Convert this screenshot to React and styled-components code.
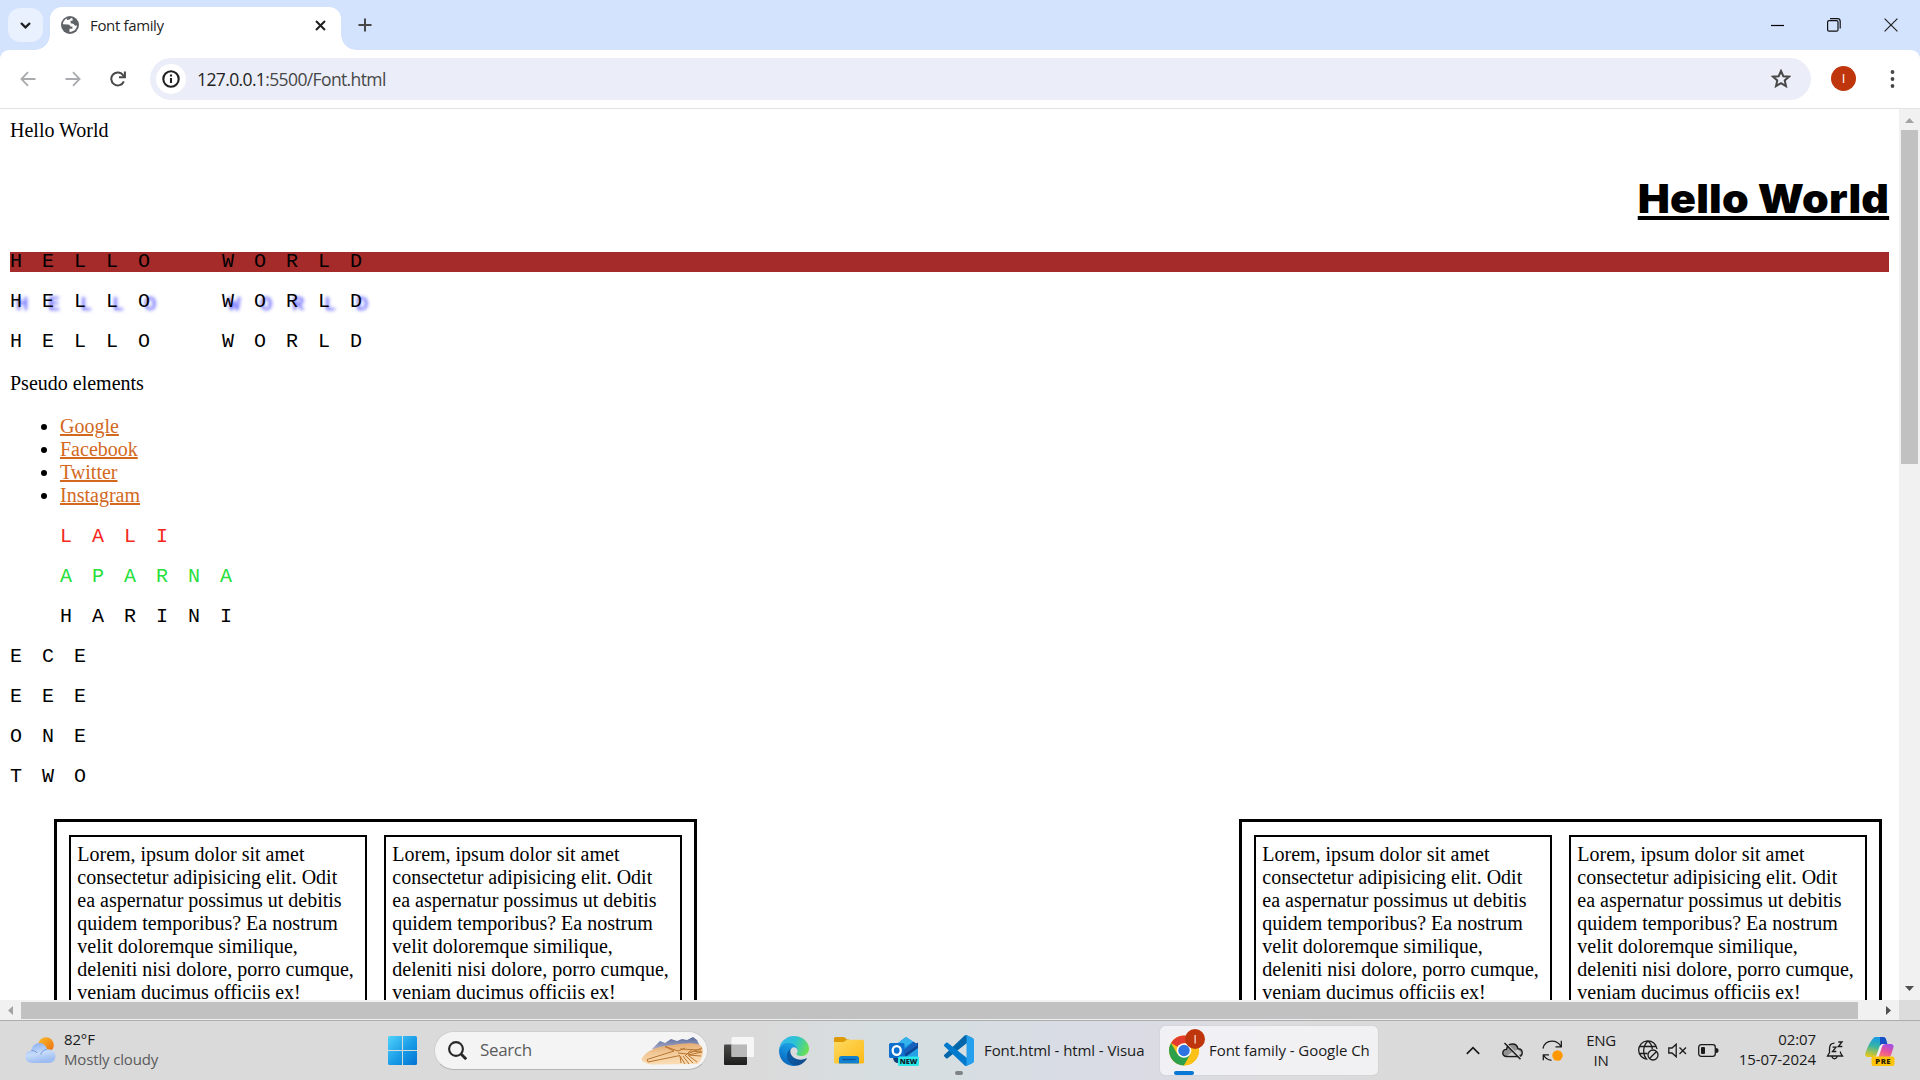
import React from "react";
import styled, { createGlobalStyle } from "styled-components";

const UI = `"Open Sans", "Noto Sans", sans-serif`;

const GlobalStyle = createGlobalStyle`
  *, *::before, *::after { box-sizing: border-box; }
  html, body { margin: 0; padding: 0; overflow: hidden; }
  body { background: #fff; }
  svg { display: block; flex: none; }
`;

const Screen = styled.div`
  width: 1920px;
  height: 1080px;
  display: flex;
  flex-direction: column;
  overflow: hidden;
  background: #fff;
`;

/* ---------- browser chrome ---------- */

const TabStrip = styled.div`
  height: 50px;
  flex: none;
  background: #d3e2fd;
  display: flex;
  align-items: flex-start;
  padding-left: 8px;
`;

const TabSearch = styled.div`
  width: 35px;
  height: 34px;
  margin-top: 8px;
  border-radius: 12px;
  background: #e9f0fe;
  display: grid;
  place-items: center;
`;

const Tab = styled.div`
  position: relative;
  width: 291px;
  height: 43px;
  margin: 7px 0 0 7px;
  padding: 0 15px 7px 11px;
  border-radius: 12px 12px 0 0;
  background: #fff;
  display: flex;
  align-items: center;
  &::before,
  &::after {
    content: "";
    position: absolute;
    bottom: 0;
    width: 15px;
    height: 15px;
  }
  &::before {
    left: -15px;
    background: radial-gradient(circle at 0 0, transparent 14.5px, #fff 15px);
  }
  &::after {
    right: -15px;
    background: radial-gradient(circle at 100% 0, transparent 14.5px, #fff 15px);
  }
`;

const TabTitle = styled.span`
  font: 15px/20px ${UI};
  letter-spacing: -0.35px;
  color: #1f1f1f;
  margin: 0 auto 0 11px;
`;

const NewTab = styled.div`
  margin: 18px auto 0 17px;
`;

const WindowButtons = styled.div`
  display: flex;
  align-items: center;
  height: 50px;
  gap: 43px;
  padding-right: 22px;
`;

const ToolbarShell = styled.div`
  height: 59px;
  flex: none;
  background: #d3e2fd;
`;

const Toolbar = styled.div`
  height: 59px;
  background: #fff;
  border-radius: 9px 9px 0 0;
  border-bottom: 1px solid #e0e2e6;
  display: flex;
  align-items: center;
  padding: 0 21px 0 20px;
`;

const NavGroup = styled.div`
  display: flex;
  gap: 29px;
  width: 130px;
`;

const Omnibox = styled.div`
  width: 1661px;
  height: 42px;
  border-radius: 21px;
  background: #ebeef8;
  display: flex;
  align-items: center;
  padding: 0 20px 0 6px;
`;

const SiteInfo = styled.div`
  width: 30px;
  height: 30px;
  border-radius: 50%;
  background: #fff;
  display: grid;
  place-items: center;
`;

const Url = styled.span`
  font: 17.5px/24px ${UI};
  letter-spacing: -0.62px;
  color: #474747;
  margin: 0 auto 0 11px;
  b { font-weight: 400; color: #1f1f1f; }
`;

const Avatar = styled.div`
  width: 25px;
  height: 25px;
  margin: -1px 34px 0 20px;
  border-radius: 50%;
  background: #bf360c;
  color: #fff;
  font: 13px/25px ${UI};
  text-align: center;
`;

/* ---------- page ---------- */

const Viewport = styled.div`
  height: 891px;
  flex: none;
  display: flex;
`;

const Page = styled.main`
  width: 1899px;
  height: 891px;
  padding: 10px;
  overflow: hidden;
  color: #000;
  font: 20px/23px "Liberation Serif", "Times New Roman", serif;
`;

const Heading = styled.h1`
  height: 57px;
  margin: 29px 0 0;
  display: flex;
  justify-content: flex-end;
  font: 900 39.5px/56px Inter, "Arial Black", sans-serif;
  span {
    letter-spacing: 0.2px;
    transform: scaleX(1.083);
    transform-origin: 100% 50%;
    text-decoration: underline;
    text-decoration-thickness: 4px;
    text-underline-offset: 3px;
    text-decoration-skip-ink: none;
  }
`;

const Mono = styled.p`
  margin: ${(p) => p.$top ?? 20}px 0 0 ${(p) => p.$indent ?? 0}px;
  height: 20px;
  font: 20px/20px "Liberation Mono", "Courier New", monospace;
  letter-spacing: 20px;
  word-spacing: 20px;
  text-transform: uppercase;
  color: ${(p) => p.$color ?? "#000"};
  background: ${(p) => p.$bg ?? "transparent"};
  text-shadow: ${(p) => p.$shadow ?? "none"};
`;

const Label = styled.div`
  margin-top: ${(p) => p.$top ?? 0}px;
  height: 23px;
`;

const LinkList = styled.ul`
  margin: 20px 0 0;
  padding-left: 50px;
  a {
    color: #d2691e;
    text-decoration: underline;
  }
`;

const BoxRow = styled.section`
  display: flex;
  justify-content: space-between;
  margin: 32px 7px 0 44px;
`;

const OuterBox = styled.div`
  width: 643px;
  height: 300px;
  border: 3px solid #000;
  padding: 13px 12px;
  display: flex;
  justify-content: space-between;
`;

const InnerBox = styled.div`
  width: 298px;
  border: 2px solid #000;
  padding: 6px 6.25px;
`;

const VScroll = styled.div`
  width: 21px;
  background: #f1f1f1;
  display: flex;
  flex-direction: column;
  align-items: center;
  justify-content: space-between;
  padding: 9px 0 9px;
`;

const VThumb = styled.div`
  width: 17px;
  height: 334px;
  margin: 7px 1px auto 0;
  background: #c1c1c1;
`;

const HScroll = styled.div`
  height: 20px;
  flex: none;
  display: flex;
  align-items: center;
  background: #f1f1f1;
  padding-left: 8px;
`;

const HThumb = styled.div`
  width: 1837px;
  height: 17px;
  margin: 1px auto 0 8px;
  background: #c1c1c1;
`;

const Corner = styled.div`
  width: 21px;
  height: 20px;
  margin-left: 8px;
  background: #dcdcdc;
`;

/* ---------- taskbar ---------- */

const Taskbar = styled.footer`
  height: 60px;
  flex: none;
  border-top: 1px solid #adadad;
  background: linear-gradient(90deg, #dadada 0, #dadada 760px, #d6dee1 890px, #d7dee2 960px, #d9dbe5 1100px, #dcdcdf 1260px, #dadada 1400px, #dadada 100%);
  display: flex;
  align-items: center;
  color: #1b1b1b;
  font: 15px/20px ${UI};
`;

const Item = styled.div`
  margin-left: ${(p) => p.$ml ?? 0}px;
  margin-top: ${(p) => p.$mt ?? 0}px;
  flex: none;
`;

const Stack = styled.div`
  width: ${(p) => p.$w}px;
  margin-left: ${(p) => p.$ml}px;
  margin-top: ${(p) => p.$mt ?? -1}px;
  display: flex;
  flex-direction: column;
  align-items: ${(p) => p.$align ?? "flex-start"};
  white-space: nowrap;
  letter-spacing: ${(p) => p.$ls ?? 0}px;
  flex: none;
`;

const Muted = styled.span`
  color: #5a5a5a;
`;

const SearchBox = styled.div`
  width: 274px;
  height: 39px;
  margin-left: 17px;
  flex: none;
  border-radius: 20px;
  border: 1px solid #cfcfcf;
  border-bottom-color: #b4b4b4;
  background: #f4f4f4;
  display: flex;
  align-items: center;
  justify-content: space-between;
  padding: 0 2px 0 13px;
  color: #5c5c5c;
  font-size: 17px;
  letter-spacing: -0.35px;
  span { margin: -1px auto 0 13px; }
`;

const AppButton = styled.div`
  position: relative;
  width: ${(p) => p.$w}px;
  height: 49px;
  margin-left: ${(p) => p.$ml}px;
  padding-left: ${(p) => p.$pl}px;
  flex: none;
  border-radius: 5px;
  background: ${(p) => (p.$active ? "rgba(250,250,252,0.72)" : "transparent")};
  box-shadow: ${(p) => (p.$active ? "0 0 1px rgba(0,0,0,0.25)" : "none")};
  display: flex;
  align-items: center;
  gap: ${(p) => p.$gap}px;
  white-space: nowrap;
  letter-spacing: ${(p) => p.$ls}px;
  > span { margin-top: -1px; }
  &::after {
    content: "";
    position: absolute;
    bottom: 0;
    left: ${(p) => p.$pl + 15 - p.$mark / 2}px;
    width: ${(p) => p.$mark}px;
    height: 4px;
    border-radius: 2px;
    background: ${(p) => (p.$active ? "#0a78d6" : "#7f8385")};
  }
`;

/* ---------- icons ---------- */

const Line = ({ w, h, vb, sw = 2, color = "#1f1f1f", children }) => (
  <svg width={w} height={h} viewBox={vb || `0 0 ${w} ${h}`} fill="none" stroke={color} strokeWidth={sw}>
    {children}
  </svg>
);

const GlobeIcon = () => (
  <svg width="18" height="18" viewBox="0 0 18 18">
    <circle cx="9" cy="9" r="9" fill="#5f6368" />
    <path d="M6.2 2.3 C3.6 3.4 2 5.8 1.9 8.2 L7 8.4 C8.6 8.5 9.3 9.3 9.2 10.6 H11.4 V12.8 H8.5 V15.9 C12.5 16 15.9 13.1 16 9.3 C15 10 13.6 9.7 13.2 8.8 C12.9 7.7 11.6 7.4 9.6 7.2 V4.8 H11.6 V2.6 L9.9 2 C9 3.4 7.6 4 6 4 Z" fill="#fff" />
  </svg>
);

const WeatherIcon = () => (
  <svg width="31" height="27" viewBox="0 0 31 27">
    <defs>
      <linearGradient id="sun" x1="0" y1="0" x2="1" y2="1">
        <stop offset="0" stopColor="#f8bf2c" />
        <stop offset="1" stopColor="#ee6a10" />
      </linearGradient>
      <linearGradient id="cloud" x1="0" y1="0" x2="0.3" y2="1">
        <stop offset="0" stopColor="#86aaf0" />
        <stop offset="0.6" stopColor="#c5dbf9" />
        <stop offset="1" stopColor="#9dbcf1" />
      </linearGradient>
    </defs>
    <circle cx="21" cy="8" r="7.8" fill="url(#sun)" />
    <path d="M7 26 C3 26 .3 23.5 .3 19.8 C.3 16.2 3 13.6 6.3 13.4 C7 8.8 10.3 6 14.3 6 C18.2 6 21.2 8.7 22 12.2 C27 11.6 30.5 14.8 30.5 19 C30.5 23.5 27.5 26 23.5 26 Z" fill="url(#cloud)" />
    <path d="M21.8 12.3 C18.5 12.6 16.4 15 15.8 17.5 M6.3 13.4 C9 13.3 11 14.5 12 16" stroke="#7899df" strokeWidth="1" fill="none" />
  </svg>
);

const StartIcon = () => (
  <svg width="29" height="29" viewBox="0 0 29 29">
    <defs>
      <linearGradient id="win" gradientUnits="userSpaceOnUse" x1="0" y1="0" x2="29" y2="29">
        <stop offset="0" stopColor="#50d2fc" />
        <stop offset="0.55" stopColor="#189be6" />
        <stop offset="1" stopColor="#0272d2" />
      </linearGradient>
    </defs>
    <g fill="url(#win)">
      <path d="M1.5 0 H14 V14 H0 V1.5 Q0 0 1.5 0Z" />
      <path d="M15 0 H27.5 Q29 0 29 1.5 V14 H15Z" />
      <path d="M0 15 H14 V29 H1.5 Q0 29 0 27.5Z" />
      <path d="M15 15 H29 V27.5 Q29 29 27.5 29 H15Z" />
    </g>
  </svg>
);

const NazcaIcon = () => (
  <svg width="65" height="30" viewBox="0 0 65 30">
    <defs>
      <linearGradient id="mount" x1="0" y1="0" x2="0" y2="1">
        <stop offset="0" stopColor="#56699c" />
        <stop offset="1" stopColor="#b9b6cd" />
      </linearGradient>
      <linearGradient id="sand" x1="0" y1="0" x2="0.2" y2="1">
        <stop offset="0" stopColor="#dfa064" />
        <stop offset="0.5" stopColor="#f1c897" />
        <stop offset="1" stopColor="#fbdcb4" />
      </linearGradient>
    </defs>
    <path d="M12 13 L20 5 L25 7 L31 3 L37 5 L42 3 L47 4 L53 1 L57 4 L60 10 V15 Z" fill="url(#mount)" />
    <path d="M2 22 C8 13 20 10 33 9 C46 7 58 6 62 11 C64 15 63 22 58 28 L12 28.5 C6 28 0 25 2 22 Z" fill="url(#sand)" />
    <path d="M7 23.5 L34 15 L25 10.5 L38 15 L45 12 M7 23.5 L8 26 L40 19.5 M38 17 L47 18 L62 12 M45 20 L50 15 L62 16 L48 19 L61 20 M40 20 L45 28 M43 20 L49 28 M46 20 L53 27 M49 20 L57 26 M40 20 L41 27 M40 13 L61 14" stroke="#b8752f" strokeWidth="1" fill="none" />
  </svg>
);

const TaskViewIcon = () => (
  <svg width="30" height="28" viewBox="0 0 30 28">
    <defs>
      <linearGradient id="tvb" x1="0" y1="0" x2="0" y2="1">
        <stop offset="0" stopColor="#4b4b49" />
        <stop offset="1" stopColor="#1d1d1d" />
      </linearGradient>
    </defs>
    <rect x="0" y="7.5" width="23" height="20.5" rx="1" fill="url(#tvb)" />
    <rect x="7.5" y="0" width="22.5" height="20" rx="1" fill="#f8f8f8" opacity="0.9" />
    <path d="M7.5 7.5 H23 V20 H7.5Z" fill="#aaa" opacity="0.75" />
  </svg>
);

const EdgeIcon = () => (
  <svg width="30" height="30" viewBox="0 0 256 256">
    <defs>
      <linearGradient id="e1" x1="0.1" y1="0.5" x2="1" y2="0.5">
        <stop offset="0" stopColor="#0c59a4" />
        <stop offset="1" stopColor="#114a8b" />
      </linearGradient>
      <linearGradient id="e2" x1="0.7" y1="0.2" x2="0.3" y2="1">
        <stop offset="0" stopColor="#1b9de2" />
        <stop offset="0.5" stopColor="#1183d4" />
        <stop offset="1" stopColor="#0861b5" />
      </linearGradient>
      <linearGradient id="e3" x1="0" y1="0.3" x2="1" y2="0.6">
        <stop offset="0" stopColor="#35b5ee" />
        <stop offset="0.5" stopColor="#2cc3d2" />
        <stop offset="1" stopColor="#6be04f" />
      </linearGradient>
    </defs>
    <path d="M231 190.500a93.700 93.700 0 0 1-10.500 4.700 101.900 101.900 0 0 1-35.900 6.500c-47.300 0-88.500-32.500-88.500-74.300a31.500 31.500 0 0 1 16.400-27.300c-42.800 1.800-53.800 46.400-53.800 72.500 0 73.900 68.100 81.400 82.800 81.400 7.900 0 19.800-2.300 27-4.600l1.300-.4a128.300 128.300 0 0 0 66.600-52.800 4 4 0 0 0-5.400-5.700z" fill="url(#e1)" />
    <path d="M105.700 241.400a79.200 79.200 0 0 1-22.700-21.300 80.700 80.700 0 0 1 29.500-120c3.200-1.500 8.500-4.100 15.600-4a32.400 32.400 0 0 1 25.700 13 31.900 31.900 0 0 1 6.300 18.700c0-.2 24.500-79.600-80-79.600-43.900 0-80 41.700-80 78.200a130.200 130.200 0 0 0 12.100 56 128 128 0 0 0 156.400 67 75.500 75.500 0 0 1-62.800-8z" fill="url(#e2)" />
    <path d="M152.300 148.900c-.9 1-3.400 2.500-3.400 5.600 0 2.600 1.700 5.200 4.800 7.300 14.300 10 41.400 8.600 41.500 8.600a59.600 59.600 0 0 0 30.300-8.300 61.400 61.400 0 0 0 30.400-52.900c.3-22.400-8-37.300-11.300-43.900C223.500 23.900 177.700 0 128 0a128 128 0 0 0-128 126.200c.5-36.500 36.800-66 80-66 3.500 0 23.500.3 42 10a72.600 72.600 0 0 1 30.900 29.300c6.100 10.600 7.200 24.100 7.200 29.500s-2.700 13.300-7.800 19.900z" fill="url(#e3)" />
  </svg>
);

const FolderIcon = () => (
  <svg width="30" height="27" viewBox="0 0 30 27">
    <defs>
      <linearGradient id="fold" x1="0" y1="0" x2="1" y2="1">
        <stop offset="0" stopColor="#ffda63" />
        <stop offset="1" stopColor="#fcb913" />
      </linearGradient>
    </defs>
    <path d="M0 1.500 Q0 0 1.500 0 H9 Q10.500 0 11.500 1 L13 2.500 H15 V9 H0 Z" fill="#dd9a06" />
    <path d="M0 5 H9.500 L13 2.700 H28.500 Q30 2.700 30 4.200 V25 Q30 26.500 28.500 26.500 H1.500 Q0 26.500 0 25 Z" fill="url(#fold)" />
    <path d="M5 26.500 V21.500 Q5 19 7.500 19 H22.500 Q25 19 25 21.500 V26.500 Z" fill="#1180cf" />
    <path d="M8.500 22.500 H21.500" stroke="#0c5299" strokeWidth="1.300" />
  </svg>
);

const OutlookIcon = () => (
  <svg width="30" height="29" viewBox="0 0 30 29">
    <path d="M5 9 L16 .4 Q17 0 18 .4 L29 8 V24 H5 Z" fill="#1a95df" />
    <path d="M8 7 L17 .3 L24 4.500 L14 11 Z" fill="#35b4ec" />
    <path d="M14 13 L29 5.500 V12 L17 22 Z" fill="#0c4595" />
    <path d="M15 13 L24.500 4.500 L29 8 L16 17 Z" fill="#1660bb" />
    <path d="M15 21 L29 11 V22 H15 Z" fill="#25a1e6" />
    <path d="M4 20 H12 V26 H8 Q4 25 4 20 Z" fill="#123e78" />
    <rect x="0" y="6" width="15.500" height="15" rx="1.500" fill="#0f6fce" />
    <ellipse cx="7.700" cy="13.500" rx="4" ry="4.400" fill="none" stroke="#fff" strokeWidth="2.300" />
    <rect x="9" y="19.500" width="21" height="9.500" rx="1.500" fill="#2be8ea" />
    <text x="19.500" y="27" fontFamily="Open Sans" fontWeight="800" fontSize="7.300" textAnchor="middle" fill="#0b2330">NEW</text>
  </svg>
);

const VSCodeIcon = () => (
  <svg width="30" height="31" viewBox="0 0 100 100" preserveAspectRatio="none">
    <path d="M96.500 10.700 L75.900.8 a6.200 6.200 0 0 0-7.100 1.200 L1.300 63.500 a4.200 4.200 0 0 0 0 6.200 l5.500 5 a4.200 4.200 0 0 0 5.300.2 L93.400 13.300 c2.700-2.100 6.600-.1 6.600 3.300 V16.300 a6.300 6.300 0 0 0-3.500-5.600Z" fill="#0065a9" />
    <path d="M96.500 89.300 L75.900 99.200 a6.200 6.200 0 0 1-7.100-1.200 L1.300 36.500 a4.200 4.200 0 0 1 0-6.200 l5.500-5 a4.200 4.200 0 0 1 5.300-.2 L93.400 86.700 c2.700 2.100 6.600.1 6.600-3.300 V83.700 a6.300 6.300 0 0 1-3.500 5.600Z" fill="#007acc" />
    <path d="M75.900 99.200 a6.200 6.200 0 0 1-7.100-1.200 c2.300 2.300 6.200.7 6.200-2.600 V4.600 C75 1.300 71.100-.3 68.800 2 a6.200 6.200 0 0 1 7.100-1.200 l20.600 9.900 A6.200 6.200 0 0 1 100 16.300 V83.700 a6.200 6.200 0 0 1-3.500 5.600Z" fill="#24a0ee" />
  </svg>
);

const ChromeIcon = () => (
  <svg width="36" height="37" viewBox="0 0 36 37">
    <g transform="translate(0 6.500)">
      <circle cx="15" cy="15" r="15" fill="#fbc116" />
      <path d="M15 15 L2.010 7.500 A15 15 0 0 1 27.990 7.500 Z" fill="#e33b2e" />
      <path d="M15 15 L21.500 18.700 L15 30 A15 15 0 0 1 2.010 7.500 L8.500 18.700 Z" fill="#2da04b" />
      <path d="M15 7.500 H28 A15 15 0 0 1 15 30 L21.500 18.700Z" fill="#fbc116" />
      <circle cx="15" cy="15" r="7.300" fill="#fff" />
      <circle cx="15" cy="15" r="5.700" fill="#2d74e2" />
    </g>
    <circle cx="26" cy="10" r="10" fill="#bf360c" />
    <rect x="25.300" y="6" width="1.700" height="8.500" fill="#eab4a2" />
  </svg>
);

const CloudOffIcon = () => (
  <svg width="21" height="18" viewBox="0 0 21 18" fill="none" stroke="#1b1b1b" strokeWidth="1.400">
    <path d="M4.500 14.500 C2.300 14.500 .8 13 .8 11 C.8 8.800 2.500 7.500 4.500 7.400 C5 4 7.300 2 10.300 2 C13.500 2 15.500 4 16 6.800 C18.500 6.900 20.200 8.500 20.200 10.700 C20.200 13 18.500 14.500 16 14.500 Z" fill="#929292" />
    <path d="M5 13.800 L11 9.500 L16 7.500 L19.500 11 L16 13.800 Z" fill="#cfcfcf" stroke="none" />
    <path d="M3.900 .9 L19.500 17" stroke="#dadada" strokeWidth="1.500" />
    <path d="M2.500 1 L18.500 17.300" strokeWidth="1.500" />
  </svg>
);

const SyncIcon = () => (
  <svg width="21" height="21" viewBox="0 0 21 21" fill="none" stroke="#1b1b1b" strokeWidth="1.300">
    <path d="M1 8.500 C2 4 5.500 1.200 10 1.200 C14 1.200 17 3 19 6.500 M19.300 .8 V6.800 H13.500" />
    <path d="M1.300 20.300 V14.800 H7 M1.500 15 C3.500 18.500 6 20 9.500 20.300" />
    <circle cx="15.500" cy="15.500" r="5.200" fill="#ff9800" stroke="none" />
  </svg>
);

const NetIcon = () => (
  <svg width="21" height="21" viewBox="0 0 21 21" fill="none" stroke="#1b1b1b" strokeWidth="1.300">
    <path d="M19 9 A9.200 9.200 0 1 0 9.500 19.300 M10 1 C4.500 6 4.500 14.500 8.500 19.200 M10 1 C13 3.500 14.200 6 14.200 9 M1.500 6.500 H18.500 M1.500 13.500 H9.500" />
    <circle cx="15" cy="15" r="5" />
    <path d="M11.700 18.300 L18.300 11.700" />
  </svg>
);

const MuteIcon = () => (
  <Line w={19} h={15} sw={1.3} color="#1b1b1b">
    <path d="M.8 5 H4 L8.200 1.200 V13.800 L4 10 H.8 Z M11.500 4.500 L18 11 M18 4.500 L11.500 11" />
  </Line>
);

const BatteryIcon = () => (
  <svg width="21" height="13" viewBox="0 0 21 13">
    <rect x=".7" y=".7" width="16.600" height="11.600" rx="2.500" fill="none" stroke="#1b1b1b" strokeWidth="1.300" />
    <rect x="3" y="3" width="4" height="7" rx="1" fill="#1b1b1b" />
    <path d="M18 4 Q20.500 4 20.500 6.500 Q20.500 9 18 9Z" fill="#1b1b1b" />
  </svg>
);

const BellIcon = () => (
  <Line w={18} h={19} sw={1.3} color="#1b1b1b">
    <path d="M8.500 2.200 C5 2.200 3.500 5 3.500 8 V11.500 L1.500 15 H16.500 L14.500 12 V10.500 M6 15.500 C6.500 18.500 10.500 18.500 11 15.500" />
    <path d="M6.500 6.200 H10 L6.500 10.500 H10.300 M12.300 1 H16 L12.300 5.500 H16.300" />
  </Line>
);

const CopilotIcon = () => (
  <svg width="30" height="30" viewBox="0 0 30 30">
    <defs>
      <linearGradient id="cpa" x1="0.5" y1="0" x2="0.3" y2="1">
        <stop offset="0" stopColor="#1599ea" />
        <stop offset="0.45" stopColor="#37b4a5" />
        <stop offset="1" stopColor="#e8c91c" />
      </linearGradient>
      <linearGradient id="cpb" x1="0.8" y1="0" x2="0.3" y2="1">
        <stop offset="0" stopColor="#a14fe6" />
        <stop offset="0.5" stopColor="#e8539a" />
        <stop offset="1" stopColor="#ff8b55" />
      </linearGradient>
    </defs>
    <path d="M8 1.500 Q8.800 0 10.500 0 H18 Q20.300 0 21 2.300 L22.300 7 H18 Q15.500 7 14.500 10 L12 17.500 Q11 20 8.500 20 H3 Q-.4 20 .3 16.500 Q3 7.500 8 1.500 Z" fill="url(#cpa)" />
    <path d="M15 0 H18 Q20.300 0 21 2.300 L22.300 7 H18 Q16 7 15 9 Z" fill="#1650c4" />
    <path d="M22 7 H25.500 Q29.500 7 28.300 11 L26 18 Q25 21 22 21 H7 Q11.500 20 12.500 17 L15.500 9 Q16.500 7 18 7 Z" fill="url(#cpb)" />
    <path d="M13.500 20 L17.300 9 Q18 7 20.500 7 H18 Q15.500 7 14.500 10 L11.500 18.500 Q11 20 9 20 Z" fill="#f3eef2" />
    <rect x="6.500" y="19.500" width="23" height="9.500" rx="2" fill="#ffc40c" />
    <text x="18.200" y="27" fontFamily="Open Sans" fontWeight="800" fontSize="7.700" letterSpacing="0.500" textAnchor="middle" fill="#2b2000">PRE</text>
  </svg>
);

const Arrow = ({ d, w, h, color }) => (
  <svg width={w} height={h} viewBox={`0 0 ${w} ${h}`}><path d={d} fill={color} /></svg>
);

/* ---------- content ---------- */

const LOREM =
  "Lorem, ipsum dolor sit amet consectetur adipisicing elit. Odit ea aspernatur possimus ut debitis quidem temporibus? Ea nostrum velit doloremque similique, deleniti nisi dolore, porro cumque, veniam ducimus officiis ex!";

const LINKS = ["Google", "Facebook", "Twitter", "Instagram"];

const NAMES = [
  { text: "Lali", color: "#f5281e", indent: 50 },
  { text: "Aparna", color: "#28e03c", indent: 50 },
  { text: "Harini", indent: 50 },
  { text: "ECE" },
  { text: "EEE" },
  { text: "One" },
  { text: "Two" },
];

const Pair = () => (
  <OuterBox>
    <InnerBox>{LOREM}</InnerBox>
    <InnerBox>{LOREM}</InnerBox>
  </OuterBox>
);

export default function App() {
  return (
    <Screen>
      <GlobalStyle />
      <TabStrip>
        <TabSearch>
          <Line w={11} h={7} sw={2.3}><path d="M1 1 L5.500 5.400 L10 1" /></Line>
        </TabSearch>
        <Tab>
          <GlobeIcon />
          <TabTitle>Font family</TabTitle>
          <Line w={11} h={11} sw={2}><path d="M1 1 L10 10 M10 1 L1 10" /></Line>
        </Tab>
        <NewTab>
          <Line w={14} h={14} sw={2} color="#474747"><path d="M7 .5 V13.500 M.5 7 H13.500" /></Line>
        </NewTab>
        <WindowButtons>
          <Line w={13} h={13} sw={1.2} color="#000"><path d="M0 6.500 H13" /></Line>
          <Line w={14} h={14} sw={1.2} color="#111">
            <rect x=".6" y="2.600" width="10.400" height="10.600" rx="1.500" />
            <path d="M3 .7 H10.500 Q13.200 .7 13.200 3.500 V10.500" />
          </Line>
          <Line w={14} h={14} sw={1.2} color="#222"><path d="M.6 .6 L13.400 13.400 M13.400 .6 L.6 13.400" /></Line>
        </WindowButtons>
      </TabStrip>
      <ToolbarShell>
        <Toolbar>
          <NavGroup>
            <Line w={16} h={16} sw={1.8} color="#a9abae"><path d="M15.500 8 H1.500 M8 1.200 L1.400 8 L8 14.800" /></Line>
            <Line w={16} h={16} sw={1.8} color="#a9abae"><path d="M.5 8 H14.500 M8 1.200 L14.600 8 L8 14.800" /></Line>
            <Line w={16} h={16} sw={2} color="#474747">
              <path d="M13.800 10.300 A6.500 6.500 0 1 1 13.300 4.500 L14 5.500" />
              <path d="M14.900 .5 V6.300 H9" />
            </Line>
          </NavGroup>
          <Omnibox>
            <SiteInfo>
              <Line w={18} h={18} sw={2.1}>
                <circle cx="9" cy="9" r="7.700" />
                <path d="M9 8 V13 M9 4.500 V6.500" />
              </Line>
            </SiteInfo>
            <Url><b>127.0.0.1</b>:5500/Font.html</Url>
            <Line w={20} h={20} sw={2} color="#474747">
              <path d="M10 2 L12.300 7.200 L18 7.700 L13.700 11.400 L15 17.100 L10 14.100 L5 17.100 L6.300 11.400 L2 7.700 L7.700 7.200 Z" />
            </Line>
          </Omnibox>
          <Avatar>I</Avatar>
          <svg width="5" height="18" viewBox="0 0 5 18" fill="#474747">
            <circle cx="2.500" cy="2" r="1.900" /><circle cx="2.500" cy="9" r="1.900" /><circle cx="2.500" cy="16" r="1.900" />
          </svg>
        </Toolbar>
      </ToolbarShell>

      <Viewport>
        <Page>
          <Label>Hello World</Label>
          <Heading><span>Hello World</span></Heading>
          <Mono $top={24} $bg="#a52a2a">Hello World</Mono>
          <Mono $shadow="6.25px 2.5px 3.75px rgba(0,0,255,0.75)">Hello World</Mono>
          <Mono>Hello World</Mono>
          <Label $top={20}>Pseudo elements</Label>
          <LinkList>
            {LINKS.map((l) => <li key={l}><a href="#top">{l}</a></li>)}
          </LinkList>
          {NAMES.map((n) => <Mono key={n.text} $color={n.color} $indent={n.indent}>{n.text}</Mono>)}
          <BoxRow><Pair /><Pair /></BoxRow>
        </Page>
        <VScroll>
          <Arrow w={9} h={5} d="M0 5 L4.500 0 L9 5Z" color="#a3a3a3" />
          <VThumb />
          <Arrow w={9} h={5} d="M0 0 L4.500 5 L9 0Z" color="#505050" />
        </VScroll>
      </Viewport>
      <HScroll>
        <Arrow w={5} h={9} d="M5 0 L0 4.500 L5 9Z" color="#a3a3a3" />
        <HThumb />
        <Arrow w={5} h={9} d="M0 0 L5 4.500 L0 9Z" color="#505050" />
        <Corner />
      </HScroll>

      <Taskbar>
        <Item $ml={25}><WeatherIcon /></Item>
        <Stack $ml={8} $w={100} $mt={-3} $ls={-0.15}>
          <span>82°F</span>
          <Muted>Mostly cloudy</Muted>
        </Stack>
        <Item $ml={224}><StartIcon /></Item>
        <SearchBox>
          <Line w={19} h={19} sw={2.1} color="#262626">
            <circle cx="8" cy="8" r="6.900" /><path d="M12.800 12.800 L18.200 18.200" strokeWidth="2.800" />
          </Line>
          <span>Search</span>
          <NazcaIcon />
        </SearchBox>
        <Item $ml={16}><TaskViewIcon /></Item>
        <Item $ml={25}><EdgeIcon /></Item>
        <Item $ml={25}><FolderIcon /></Item>
        <Item $ml={25} $mt={2}><OutlookIcon /></Item>
        <AppButton $ml={16} $w={225} $pl={9} $gap={10} $ls={-0.08} $mark={8}>
          <VSCodeIcon />
          <span>Font.html - html - Visua</span>
        </AppButton>
        <AppButton $active $ml={0} $w={218} $pl={9} $gap={4} $ls={-0.06} $mark={20}>
          <Item $mt={-7}><ChromeIcon /></Item>
          <span>Font family - Google Ch</span>
        </AppButton>
        <Item $ml={88}>
          <Line w={14} h={9} sw={1.7} color="#1b1b1b"><path d="M.8 7.800 L7 1.600 L13.200 7.800" /></Line>
        </Item>
        <Item $ml={22}><CloudOffIcon /></Item>
        <Item $ml={19}><SyncIcon /></Item>
        <Stack $ml={21} $w={34} $align="center" $ls={-0.3}>
          <span>ENG</span>
          <span>IN</span>
        </Stack>
        <Item $ml={20}><NetIcon /></Item>
        <Item $ml={9}><MuteIcon /></Item>
        <Item $ml={11}><BatteryIcon /></Item>
        <Stack $ml={16} $w={81} $align="flex-end" $mt={-3} $ls={-0.1}>
          <span>02:07</span>
          <span>15-07-2024</span>
        </Stack>
        <Item $ml={10}><BellIcon /></Item>
        <Item $ml={21} $mt={2}><CopilotIcon /></Item>
      </Taskbar>
    </Screen>
  );
}
